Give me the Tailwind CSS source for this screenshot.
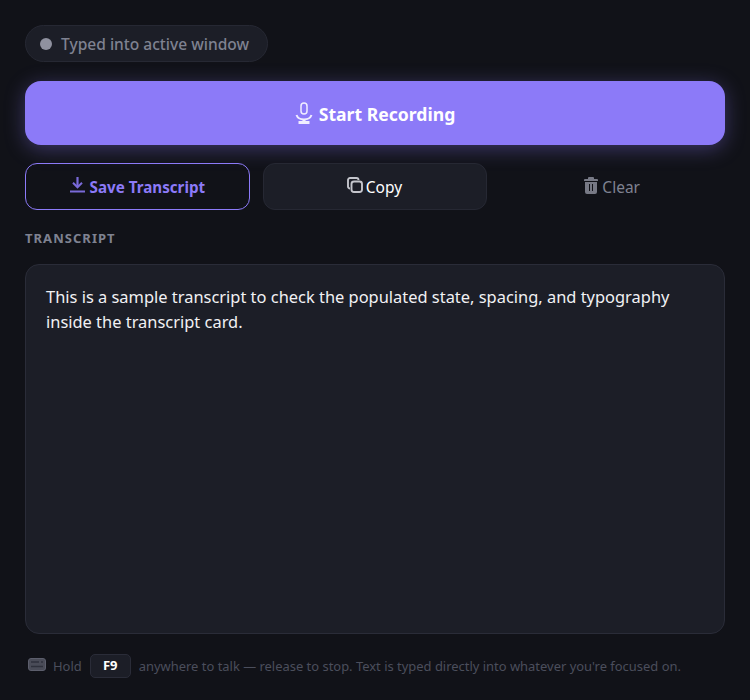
<!DOCTYPE html>
<html lang="en">
<head>
    <meta charset="UTF-8">
    <title>Transcript</title>
    <script src="https://cdn.jsdelivr.net/npm/@tailwindcss/browser@4"></script>
</head>
<body class="bg-[#111218] h-[700px] overflow-hidden font-['Noto_Sans',sans-serif]">
    <div class="h-full flex flex-col px-[25px] pt-[25px]">

        <!-- Status pill -->
        <div class="self-start h-[37px] w-[243px] flex items-center gap-[9px] pl-[14px] rounded-full bg-[#1c1e27] border border-[#262833]">
            <span class="w-[12px] h-[12px] rounded-full bg-[#8f919f]"></span>
            <span class="relative top-[1px] text-[15.550px] font-medium text-[#7f8291]">Typed into active window</span>
        </div>

        <!-- Record button -->
        <button class="mt-[19px] h-[64px] flex items-center justify-center gap-[6px] rounded-[16px] bg-[#8c7af8] text-white text-[17.6px] font-bold shadow-[0_4px_20px_rgba(140,122,248,0.35)]">
            <svg class="w-[18px] h-[23px]" viewBox="0 0 18 23" fill="none" stroke="#f0edff" stroke-width="1.500">
                <rect x="6" y="1" width="6" height="11" rx="3" />
                <path d="M1.500 13c1 2.800 3.800 4.500 7.500 4.500s6.500-1.700 7.500-4.500" stroke-width="2" />
                <path d="M3.500 20.500h11" stroke-width="3" />
                <path d="M9 17v2" stroke-width="3" />
            </svg>
            <span class="relative top-[1px]">Start Recording</span>
        </button>

        <!-- Actions -->
        <div class="mt-[18px] grid grid-cols-3 gap-[13px] h-[47px]">
            <button class="flex items-center justify-center gap-[5px] rounded-[12px] border border-[#8c7af8] text-[#8c7af8] text-[15.200px] font-bold">
                <svg class="w-[15px] h-[16px] -mt-[3px]" viewBox="0 0 15 16" fill="none" stroke="#7a6ad8">
                    <path d="M7.500 0v9" stroke-width="2.200" />
                    <path d="M3 5.800l4.500 4.500 4.500-4.500" stroke-width="2" />
                    <path d="M0 14.500h15" stroke-width="2" />
                </svg>
                <span class="relative top-[1px]">Save Transcript</span>
            </button>
            <button class="flex items-center justify-center gap-[3px] pr-[1px] rounded-[12px] bg-[#1c1e27] border border-[#262833] text-white text-[15.500px] font-normal">
                <svg class="w-[16px] h-[16px] -mt-[3px]" viewBox="0 0 16 16" fill="none" stroke="#c4c5cc" stroke-width="1.900">
                    <path d="M3 11.500a2 2 0 0 1-2-2V3a2 2 0 0 1 2-2h6.500a2 2 0 0 1 2 2" />
                    <rect x="4.500" y="4.500" width="10.500" height="10.500" rx="2.500" />
                </svg>
                <span class="relative top-[1px]">Copy</span>
            </button>
            <button class="flex items-center justify-center gap-[4px] pr-[1px] text-[#7f8291] text-[15.500px] font-normal">
                <svg class="w-[14px] h-[17px] -mt-[3px]" viewBox="0 0 14 17" fill="#777985">
                    <path d="M5 0h4a1 1 0 0 1 1 1v1h3a1 1 0 0 1 1 1v1H0V3a1 1 0 0 1 1-1h3V1a1 1 0 0 1 1-1z" />
                    <path fill-rule="evenodd" d="M1 5h12v10a2 2 0 0 1-2 2H3a2 2 0 0 1-2-2zm4 2v7h1V7zm3 0v7h1V7z" />
                </svg>
                <span class="relative top-[1px]">Clear</span>
            </button>
        </div>

        <!-- Transcript -->
        <div class="mt-[20px] h-[17px] flex items-center text-[13px] font-bold tracking-[0.08em] text-[#7f8291]">TRANSCRIPT</div>
        <div class="mt-[17px] h-[370px] rounded-[14px] bg-[#1c1e27] border border-[#2a2c38] px-[20px] pt-[20px] text-[16.430px] leading-[24.500px] text-[#f1f1f4]">
            This is a sample transcript to check the populated state, spacing, and typography inside the transcript card.
        </div>

        <!-- Footer hint -->
        <div class="mt-[20px] h-[24px] flex items-center pl-[3px] text-[12.950px] text-[#4b4e5c]">
            <svg class="w-[18px] h-[13px] mr-[7px] -mt-[3px]" viewBox="0 0 18 13" fill="none">
                <rect x="0.500" y="0.500" width="17" height="12" rx="2.500" fill="#4a4c58" stroke="#5c5e6c" />
                <path d="M3 4h8M13 4h2M3 8.500h12" stroke="#2f313c" stroke-width="1.500" />
            </svg>
            <span class="relative top-[1px]">Hold</span>
            <kbd class="mx-[8px] w-[41px] h-[24px] flex items-center justify-center rounded-[5px] bg-[#1c1e27] border border-[#2a2c38] text-white text-[13px] font-bold font-['Noto_Sans',sans-serif]">F9</kbd>
            <span class="relative top-[1px]">anywhere to talk — release to stop. Text is typed directly into whatever you're focused on.</span>
        </div>
    </div>
</body>
</html>
